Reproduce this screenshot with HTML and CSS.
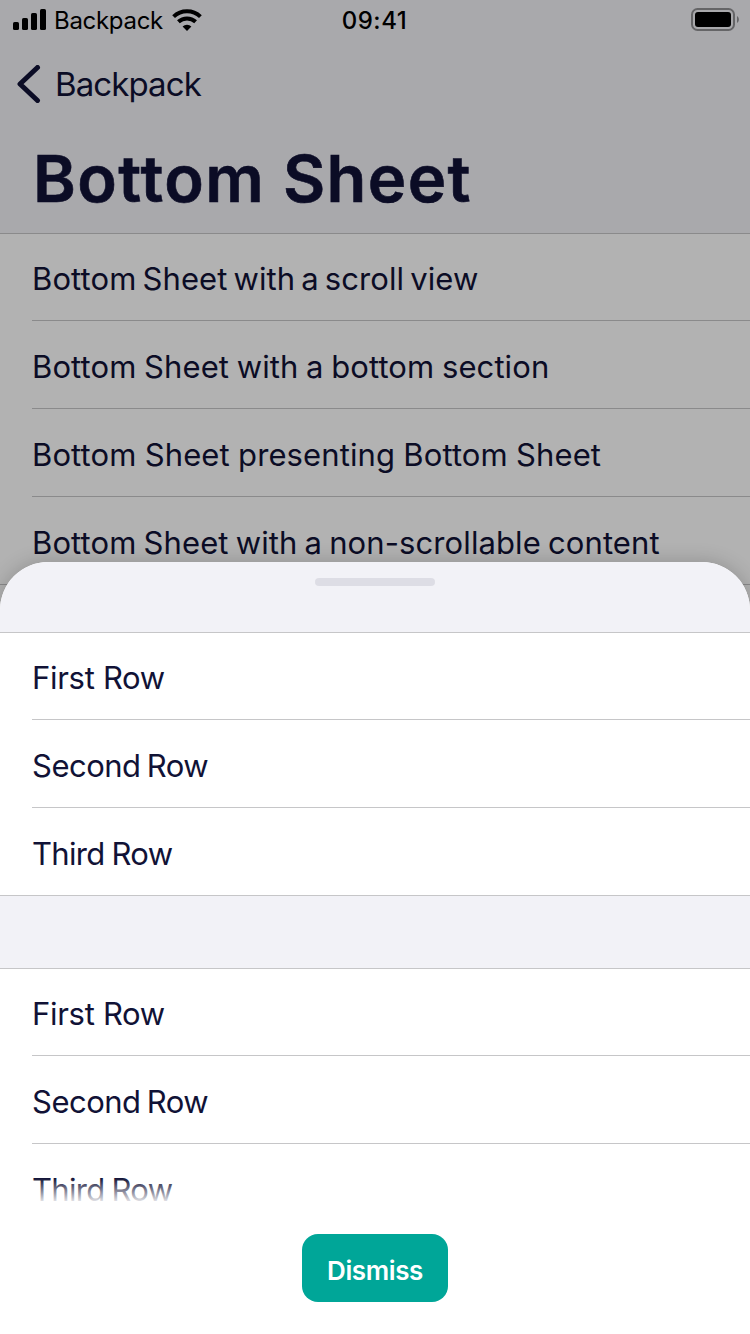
FILE: index.html
```html
<!DOCTYPE html>
<html lang="en">
<head>
<meta charset="utf-8">
<title>Bottom Sheet</title>
<link rel="stylesheet" href="styles.css">
</head>
<body>
<div class="screen">
  <main class="page">
    <header class="header">
      <div class="status">
        <div class="status-left">
          <svg class="signal" width="34" height="22" viewBox="0 0 34 22"><rect x="0" y="13" width="6" height="8" rx="1.6"/><rect x="9" y="9" width="6" height="12" rx="1.6"/><rect x="18" y="4" width="6" height="17" rx="1.6"/><rect x="27" y="0" width="6" height="21" rx="1.6"/></svg>
          <span class="carrier">Backpack</span>
          <svg class="wifi" width="30" height="22" viewBox="0 0 30 22"><path class="arc" d="M1.600 7.600a19.400 19.400 0 0 1 26.800 0M6.400 12.800a12.600 12.600 0 0 1 17.200 0"/><path d="M15 22l-4.400-4.600a6.400 6.400 0 0 1 8.800 0z"/></svg>
        </div>
        <span class="time">09:41</span>
        <svg class="battery" width="49" height="24" viewBox="0 0 49 24"><rect class="case" x="1" y="1" width="42" height="21" rx="5.5"/><rect x="4" y="4" width="36" height="15" rx="3"/><path class="cap" d="M46 8c2.500 1.500 2.500 5.500 0 7z"/></svg>
      </div>
      <nav class="back">
        <svg width="24" height="38" viewBox="0 0 24 38"><path class="chevron" d="M20.500 2.500L3 19l17.500 16.500"/></svg>
        <span class="back-label">Backpack</span>
      </nav>
      <h1 class="title">Bottom Sheet</h1>
    </header>
    <ul class="group">
      <li class="row"><span class="t-scroll">Bottom Sheet with a scroll view</span></li>
      <li class="row"><span class="t-section">Bottom Sheet with a bottom section</span></li>
      <li class="row"><span class="t-present">Bottom Sheet presenting Bottom Sheet</span></li>
      <li class="row"><span class="t-static">Bottom Sheet with a non-scrollable content</span></li>
    </ul>
  </main>
  <div class="scrim"></div>
  <section class="sheet">
    <div class="grabber-area"><div class="grabber"></div></div>
    <div class="list">
      <ul class="group">
        <li class="row"><span class="t-first">First Row</span></li>
        <li class="row"><span class="t-second">Second Row</span></li>
        <li class="row"><span class="t-third">Third Row</span></li>
      </ul>
      <ul class="group">
        <li class="row"><span class="t-first">First Row</span></li>
        <li class="row"><span class="t-second">Second Row</span></li>
        <li class="row"><span class="t-third">Third Row</span></li>
      </ul>
      <div class="fade"></div>
    </div>
    <footer class="footer"><button class="dismiss">Dismiss</button></footer>
  </section>
</div>
</body>
</html>
```
FILE: styles.css
```css
* { box-sizing: border-box; }
body { margin: 0; font-family: Inter, "Liberation Sans", sans-serif; color: #111236; }
.screen { position: relative; width: 750px; height: 1334px; overflow: hidden; background: #fff; }
.header { height: 233px; background: #f2f2f7; }
.status { display: grid; grid-template-columns: 1fr auto 1fr; height: 40px; padding: 0 10px 0 13px; color: #000; }
.status-left { display: flex; }
.signal { margin-top: 9px; }
.carrier { margin-left: 7px; font-size: 24px; line-height: 42px; letter-spacing: -.3px; }
.wifi { margin: 9px 0 0 9px; }
.arc { fill: none; stroke: #000; stroke-width: 4; }
.time { margin-left: -4px; font-size: 24px; font-weight: 500; line-height: 42px; letter-spacing: .5px; }
.battery { justify-self: end; margin-top: 8px; }
.case { fill: none; stroke: #000; stroke-opacity: .4; stroke-width: 2; }
.cap { fill: #000; fill-opacity: .4; }
.back { display: flex; align-items: center; height: 88px; padding-left: 17px; }
.chevron { fill: none; stroke: #111236; stroke-width: 5; stroke-linecap: round; stroke-linejoin: round; }
.back-label { margin-left: 14px; font-size: 33px; letter-spacing: -.9px; }
.title { margin: 0; padding-left: 33px; font-size: 65px; line-height: 101px; font-weight: 600; letter-spacing: 1.400px; -webkit-text-stroke: .6px #111236; }
.group { margin: 0; padding: 0; list-style: none; border-top: 1px solid #c6c6c8; background: #fff; }
.row { height: 88px; margin-left: 32px; border-bottom: 1px solid #c6c6c8; font-size: 31px; line-height: 92px; white-space: nowrap; letter-spacing: .1px; }
.row:first-child { height: 87px; line-height: 90px; }
.row:last-child { margin-left: 0; padding-left: 32px; }
.t-scroll { word-spacing: -2.800px; }
.t-section { word-spacing: -1.200px; }
.t-present { word-spacing: -.5px; }
.t-static { word-spacing: -1.700px; }
.t-first { letter-spacing: -.3px; }
.t-second { letter-spacing: -.5px; word-spacing: -2px; }
.t-third { letter-spacing: -.7px; word-spacing: -1px; }
.scrim { position: absolute; inset: 0; background: rgba(0,0,0,.3); }
.sheet { position: absolute; inset: 562px 0 0; display: flex; flex-direction: column; overflow: hidden; background: #fff; border-radius: 48px 48px 0 0; box-shadow: 0 0 20px rgba(0,0,0,.2); }
.grabber-area { flex: none; height: 70px; padding-top: 16px; background: #f2f2f7; }
.grabber { width: 120px; height: 8px; margin: 0 auto; border-radius: 4px; background: #dddde5; }
.list { position: relative; flex: none; height: 570px; overflow: hidden; background: #f2f2f7; }
.list .group + .group { margin-top: 72px; }
.fade { position: absolute; inset: auto 0 0; height: 24px; background: linear-gradient(rgba(255,255,255,0), rgba(255,255,255,.9)); }
.footer { display: flex; justify-content: center; padding-top: 32px; }
.dismiss { width: 146px; height: 68px; padding: 5px 0 0; border: 0; border-radius: 16px; background: #00a698; color: #fff; font: 600 26px Inter, "Liberation Sans", sans-serif; letter-spacing: -.4px; }
```
